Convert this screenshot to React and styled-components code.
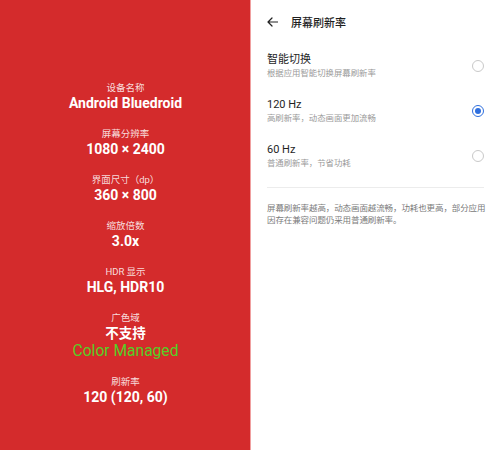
import React, { useState } from "react";
import styled, { createGlobalStyle } from "styled-components";

const GlobalStyle = createGlobalStyle`
    html, body {
        margin: 0;
        padding: 0;
        background: #ffffff;
    }
    body {
        font-family: Roboto, "Noto Sans CJK SC", sans-serif;
        -webkit-font-smoothing: antialiased;
    }
`;

const Screen = styled.div`
    width: 500px;
    height: 450px;
    display: grid;
    grid-template-columns: 251px 1fr;
    overflow: hidden;
`;

const InfoPanel = styled.div`
    background: #d42b2c;
    display: flex;
    flex-direction: column;
    align-items: center;
    padding-top: 81px;
    gap: 15px;
    box-shadow: inset -1px 0 0 #f0a0a0;
`;

const InfoGroup = styled.div`
    display: flex;
    flex-direction: column;
    align-items: center;
    text-align: center;
`;

const InfoLabel = styled.div`
    font-size: 9.5px;
    line-height: 14px;
    color: rgba(255, 255, 255, 0.85);
`;

const InfoValue = styled.div`
    font-size: ${(p) => (p.$cjk ? "13.5px" : "14px")};
    line-height: 17px;
    font-weight: 700;
    color: #ffffff;
`;

const ManagedTag = styled.div`
    font-size: 15.6px;
    line-height: 18px;
    color: #55cf26;
`;

const SettingsPanel = styled.div`
    background: #ffffff;
    display: flex;
    flex-direction: column;
    padding: 0 16px 0 16px;
`;

const Header = styled.div`
    height: 44px;
    display: flex;
    align-items: center;
    gap: 13px;
`;

const BackButton = styled.button`
    background: none;
    border: none;
    padding: 0;
    display: flex;
    align-items: center;
    color: #222;
    cursor: pointer;
`;

const Title = styled.div`
    font-size: 11px;
    font-weight: 500;
    color: #1f1f1f;
`;

const OptionRow = styled.label`
    display: flex;
    align-items: center;
    justify-content: space-between;
    padding: 8px 0 9px;
    cursor: pointer;
`;

const OptionText = styled.div`
    display: flex;
    flex-direction: column;
`;

const OptionTitle = styled.div`
    font-size: 11px;
    line-height: 15px;
    color: #1f1f1f;
`;

const OptionHint = styled.div`
    font-size: 8.4px;
    line-height: 13px;
    color: #9a9a9a;
`;

const Radio = styled.span`
    width: 12px;
    height: 12px;
    border-radius: 50%;
    box-sizing: border-box;
    border: ${(p) => (p.$checked ? "1.5px solid #2f6fde" : "1px solid #c9c9c9")};
    display: flex;
    align-items: center;
    justify-content: center;

    &::after {
        content: "";
        width: 6px;
        height: 6px;
        border-radius: 50%;
        background: ${(p) => (p.$checked ? "#2f6fde" : "transparent")};
    }
`;

const Divider = styled.div`
    height: 1px;
    background: #ececec;
    margin: 8px 0 15px;
`;

const Note = styled.p`
    margin: 0;
    margin-right: -2px;
    font-size: 8.5px;
    letter-spacing: -0.1px;
    line-height: 11.5px;
    color: #7a7a7a;
`;

const specs = [
    { label: "设备名称", value: "Android Bluedroid" },
    { label: "屏幕分辨率", value: "1080 × 2400" },
    { label: "界面尺寸（dp）", value: "360 × 800" },
    { label: "缩放倍数", value: "3.0x" },
    { label: "HDR 显示", value: "HLG, HDR10" },
    { label: "广色域", value: "不支持", cjk: true, managed: true },
    { label: "刷新率", value: "120 (120, 60)" }
];

const options = [
    { id: "auto", title: "智能切换", hint: "根据应用智能切换屏幕刷新率" },
    { id: "120", title: "120 Hz", hint: "高刷新率，动态画面更加流畅" },
    { id: "60", title: "60 Hz", hint: "普通刷新率，节省功耗" }
];

function App() {
    const [rate, setRate] = useState("120");

    return (
        <>
            <GlobalStyle />
            <Screen>
                <InfoPanel>
                    {specs.map((s) => (
                        <InfoGroup key={s.label}>
                            <InfoLabel>{s.label}</InfoLabel>
                            <InfoValue $cjk={s.cjk}>{s.value}</InfoValue>
                            {s.managed && <ManagedTag>Color Managed</ManagedTag>}
                        </InfoGroup>
                    ))}
                </InfoPanel>
                <SettingsPanel>
                    <Header>
                        <BackButton type="button">
                            <svg width="11" height="10" viewBox="0 0 11 10" fill="none">
                                <path
                                    d="M10.5 5H1M5 1L1 5l4 4"
                                    stroke="#222"
                                    strokeWidth="1.2"
                                    strokeLinecap="round"
                                    strokeLinejoin="round"
                                />
                            </svg>
                        </BackButton>
                        <Title>屏幕刷新率</Title>
                    </Header>
                    {options.map((o) => (
                        <OptionRow key={o.id} onClick={() => setRate(o.id)}>
                            <OptionText>
                                <OptionTitle>{o.title}</OptionTitle>
                                <OptionHint>{o.hint}</OptionHint>
                            </OptionText>
                            <Radio $checked={rate === o.id} />
                        </OptionRow>
                    ))}
                    <Divider />
                    <Note>
                        屏幕刷新率越高，动态画面越流畅，功耗也更高，部分应用因存在兼容问题仍采用普通刷新率。
                    </Note>
                </SettingsPanel>
            </Screen>
        </>
    );
}

export default App;
